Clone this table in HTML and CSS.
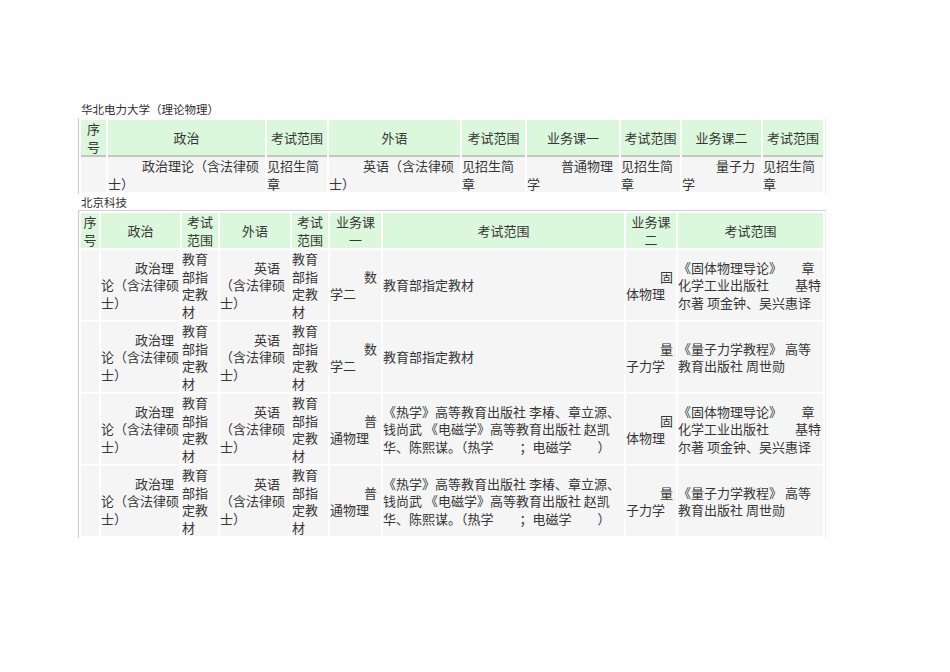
FILE: index.html
```html
<!DOCTYPE html>
<html lang="zh-CN">
<head>
<meta charset="utf-8">
<title>考试范围</title>
<link rel="stylesheet" href="styles.css">
</head>
<body>
<div class="page">
  <div class="caption cap1">华北电力大学（理论物理）</div>
  <table class="grid t1">
    <thead>
      <tr>
        <th class="a1">序号</th>
        <th class="a2">政治</th>
        <th class="a3">考试范围</th>
        <th class="a4">外语</th>
        <th class="a5">考试范围</th>
        <th class="a6">业务课一</th>
        <th class="a7">考试范围</th>
        <th class="a8">业务课二</th>
        <th class="a9">考试范围</th>
      </tr>
    </thead>
    <tbody>
      <tr>
        <td></td>
        <td class="ind">政治理论（含法律硕士）</td>
        <td>见招生简章</td>
        <td class="ind">英语（含法律硕士）</td>
        <td>见招生简章</td>
        <td class="ind">普通物理学</td>
        <td>见招生简章</td>
        <td class="ind">量子力学</td>
        <td>见招生简章</td>
      </tr>
    </tbody>
  </table>

  <div class="caption cap2">北京科技</div>
  <table class="grid t2">
    <thead>
      <tr>
        <th class="b1">序号</th>
        <th class="b2">政治</th>
        <th class="b3">考试范围</th>
        <th class="b4">外语</th>
        <th class="b5">考试范围</th>
        <th class="b6">业务课一</th>
        <th class="b7">考试范围</th>
        <th class="b8">业务课二</th>
        <th class="b9">考试范围</th>
      </tr>
    </thead>
    <tbody>
      <tr>
        <td></td>
        <td class="ind">政治理论（含法律硕士）</td>
        <td>教育部指定教材</td>
        <td class="ind">英语（含法律硕士）</td>
        <td>教育部指定教材</td>
        <td class="ind">数学二</td>
        <td>教育部指定教材</td>
        <td class="ind">固体物理</td>
        <td>《固体物理导论》　　章化学工业出版社　　基特尔著 项金钟、吴兴惠译</td>
      </tr>
      <tr>
        <td></td>
        <td class="ind">政治理论（含法律硕士）</td>
        <td>教育部指定教材</td>
        <td class="ind">英语（含法律硕士）</td>
        <td>教育部指定教材</td>
        <td class="ind">数学二</td>
        <td>教育部指定教材</td>
        <td class="ind">量子力学</td>
        <td>《量子力学教程》 高等教育出版社 周世勋</td>
      </tr>
      <tr>
        <td></td>
        <td class="ind">政治理论（含法律硕士）</td>
        <td>教育部指定教材</td>
        <td class="ind">英语（含法律硕士）</td>
        <td>教育部指定教材</td>
        <td class="ind">普通物理</td>
        <td>《热学》高等教育出版社 李椿、章立源、钱尚武 《电磁学》高等教育出版社 赵凯华、陈熙谋。（热学　　；电磁学　　）</td>
        <td class="ind">固体物理</td>
        <td>《固体物理导论》　　章化学工业出版社　　基特尔著 项金钟、吴兴惠译</td>
      </tr>
      <tr>
        <td></td>
        <td class="ind">政治理论（含法律硕士）</td>
        <td>教育部指定教材</td>
        <td class="ind">英语（含法律硕士）</td>
        <td>教育部指定教材</td>
        <td class="ind">普通物理</td>
        <td>《热学》高等教育出版社 李椿、章立源、钱尚武 《电磁学》高等教育出版社 赵凯华、陈熙谋。（热学　　；电磁学　　）</td>
        <td class="ind">量子力学</td>
        <td>《量子力学教程》 高等教育出版社 周世勋</td>
      </tr>
    </tbody>
  </table>
</div>
</body>
</html>
```

FILE: styles.css
```css
html, body {
  margin: 0;
  padding: 0;
  background: #ffffff;
}

body {
  font-family: "Noto Sans CJK SC", "Noto Sans", sans-serif;
  color: #363636;
}

.page {
  padding: 100px 0 0 78px;
}

.caption {
  font-size: 11.5px;
  line-height: 18px;
  height: 18px;
  padding-left: 3px;
  color: #2e2e2e;
}

.cap2 {
  height: 16px;
  line-height: 16px;
}

.grid {
  border-collapse: separate;
  border-spacing: 2px;
  table-layout: fixed;
  width: 748px;
  border-left: 1px solid #c9c9c9;
  border-right: 1px solid #efefef;
  font-size: 13px;
  line-height: 17.5px;
}

.t2 {
  border-top: 1px solid #d0d0d0;
}

.grid th,
.grid td {
  padding: 0;
  box-sizing: border-box;
  vertical-align: middle;
  overflow: hidden;
}

.grid th {
  background: #dcf8dc;
  font-weight: normal;
  text-align: center;
  height: 35px;
}

.t1 th {
  box-shadow: 0 2px 0 #c4c4c4;
}

.grid td {
  background: #f5f5f5;
  text-align: left;
  word-break: break-all;
}

.t1 td {
  height: 35px;
}

.t2 td {
  height: 70px;
}

.grid td.ind {
  text-indent: 34px;
}

/* table 1 columns */
.a1 { width: 25px; }
.a2 { width: 157px; }
.a3 { width: 60px; }
.a4 { width: 131px; }
.a5 { width: 63px; }
.a6 { width: 92px; }
.a7 { width: 59px; }
.a8 { width: 79px; }
.a9 { width: 60px; }

/* table 2 columns */
.b1 { width: 18px; }
.b2 { width: 79px; }
.b3 { width: 36px; }
.b4 { width: 70px; }
.b5 { width: 36px; }
.b6 { width: 51px; }
.b7 { width: 241px; }
.b8 { width: 50px; }
.b9 { width: 145px; }
```
